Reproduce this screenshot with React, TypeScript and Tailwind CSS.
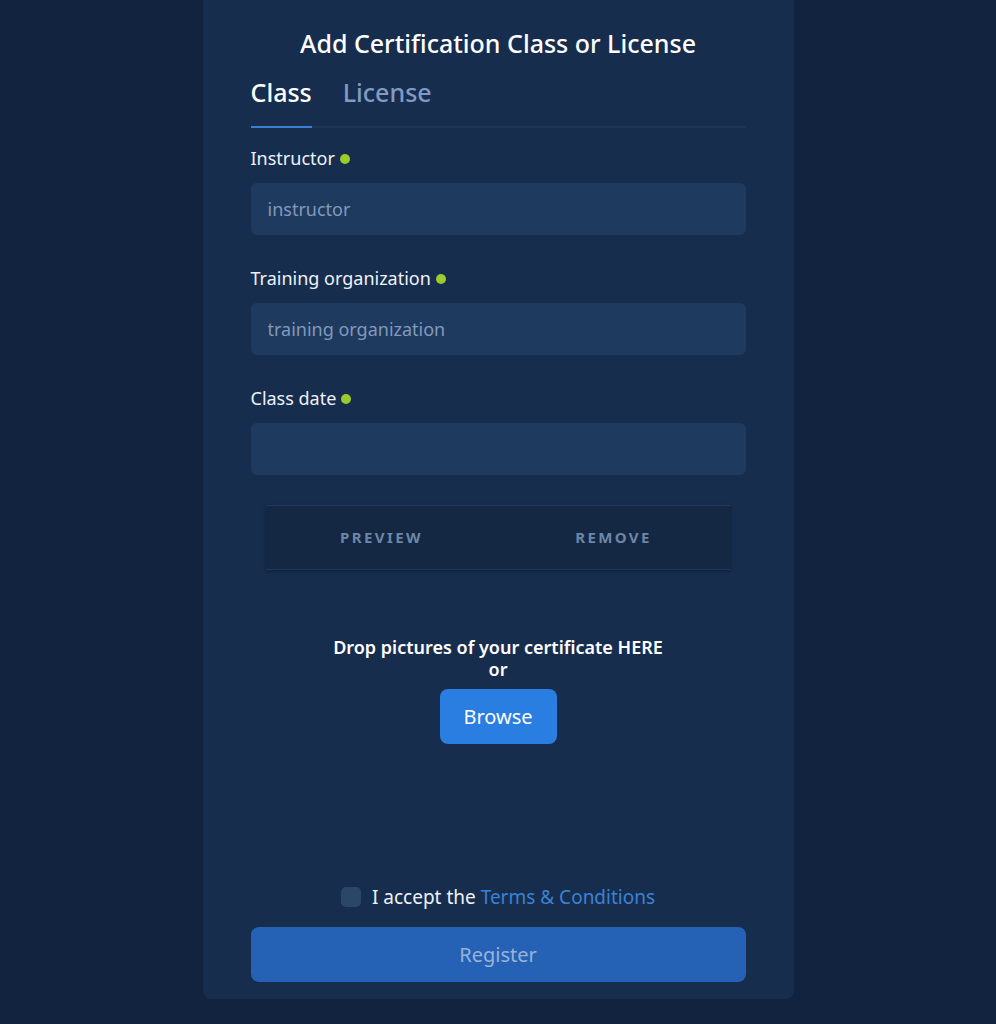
import React, { useState } from 'react';

const Label: React.FC<{ text: string }> = ({ text }) => (
  <div className="flex items-center gap-[5px] text-[18px] leading-6 text-[#eef2f8]">
    <span>{text}</span>
    <span className="inline-block w-[10px] h-[10px] rounded-full bg-[#9ccc2c] mt-[2px]" />
  </div>
);

const Field: React.FC<{ label: string; placeholder?: string }> = ({ label, placeholder }) => (
  <div className="flex flex-col">
    <Label text={label} />
    <input
      className="mt-[13px] h-[52px] w-full rounded-md bg-[#1f3a5f] px-[17px] text-[18px] text-[#eef2f8] placeholder:text-[#8199ba] outline-none"
      placeholder={placeholder}
    />
  </div>
);

const App: React.FC = () => {
  const [tab, setTab] = useState<'class' | 'license'>('class');
  const [accepted, setAccepted] = useState(false);

  return (
    <div className="min-h-screen bg-[#12233f] flex justify-center" style={{ fontFamily: '"Noto Sans", Lato, sans-serif' }}>
      <div className="w-[591px] h-[999px] bg-[#172d4e] rounded-b-lg px-12 pt-[27px] pb-[17px] flex flex-col">
        <h1 className="text-center text-[25px] leading-8 font-medium text-white">
          Add Certification Class or License
        </h1>

        <div className="mt-[17px] flex border-b-2 border-[#1d3659]">
          <button
            onClick={() => setTab('class')}
            className={`pb-[18px] -mb-[2px] border-b-2 text-[25px] leading-8 font-medium ${tab === 'class' ? 'border-[#3b7fd4] text-white' : 'border-transparent text-[#7f9bc4]'}`}
          >
            Class
          </button>
          <button
            onClick={() => setTab('license')}
            className={`ml-[31px] pb-[18px] -mb-[2px] border-b-2 text-[25px] leading-8 font-medium ${tab === 'license' ? 'border-[#3b7fd4] text-white' : 'border-transparent text-[#7f9bc4]'}`}
          >
            License
          </button>
        </div>

        <div className="mt-[18px] flex flex-col gap-[31px]">
          <Field label="Instructor" placeholder="instructor" />
          <Field label="Training organization" placeholder="training organization" />
          <Field label="Class date" />
        </div>

        <div className="mt-[30px] ml-[15px] mr-[16px] h-[65px] grid grid-cols-2 bg-[#142843] border-y border-[#1e3a60] shadow-[0_1px_3px_rgba(0,0,0,0.35)]">
          <button className="text-[15px] font-bold tracking-[0.16em] text-[#6d86a8]">PREVIEW</button>
          <button className="text-[15px] font-bold tracking-[0.16em] text-[#6d86a8]">REMOVE</button>
        </div>

        <div className="mt-[66px] flex flex-col items-center text-[18px] leading-[22px] font-semibold text-white">
          <span>Drop pictures of your certificate HERE</span>
          <span>or</span>
          <button className="mt-[9px] w-[117px] h-[55px] rounded-lg bg-[#2a7de1] text-[20px] font-normal text-white">
            Browse
          </button>
        </div>

        <div className="mt-auto flex items-center justify-center gap-[11px] text-[19px] leading-6">
          <button
            onClick={() => setAccepted(!accepted)}
            className={`w-[20px] h-[20px] rounded-[5px] ${accepted ? 'bg-[#2a7de1]' : 'bg-[#2a4668]'}`}
          />
          <span className="text-[#eef2f8]">
            I accept the <a className="text-[#3b82d6]">Terms &amp; Conditions</a>
          </span>
        </div>

        <button className="mt-[18px] h-[55px] w-full rounded-lg bg-[#2562b6] text-[20px] text-[#98b3d8]">
          Register
        </button>
      </div>
    </div>
  );
};

export default App;
